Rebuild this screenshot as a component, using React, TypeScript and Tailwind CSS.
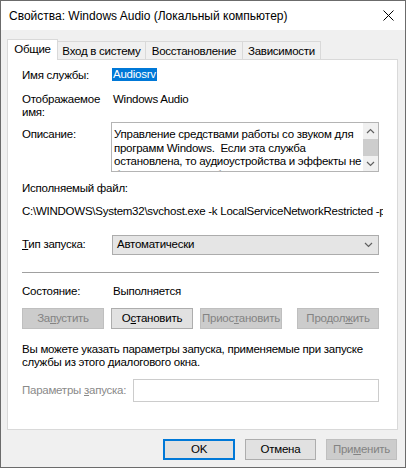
import React from "react";

const font = "font-['Segoe_UI','Liberation_Sans',sans-serif]";

const TabBtn: React.FC<{ label: string; w: string; active?: boolean }> = ({ label, w, active }) =>
  active ? (
    <div className={`${w} h-[21px] -mb-px relative z-10 bg-white border border-b-0 border-[#d9d9d9] flex items-center justify-center whitespace-nowrap`}>
      {label}
    </div>
  ) : (
    <div className={`${w} h-[18px] -ml-px bg-[#f0f0f0] border border-b-0 border-[#d9d9d9] flex items-center justify-center pt-[2px] whitespace-nowrap`}>
      {label}
    </div>
  );

const SvcButton: React.FC<{ children: React.ReactNode; disabled?: boolean }> = ({ children, disabled }) => (
  <div
    className={
      disabled
        ? "w-[82px] h-[21px] bg-[#cccccc] border border-[#bfbfbf] text-[#838383] flex items-center justify-center whitespace-nowrap"
        : "w-[82px] h-[21px] bg-[#e1e1e1] border border-[#adadad] text-black flex items-center justify-center whitespace-nowrap"
    }
  >
    {children}
  </div>
);

const Chevron: React.FC<{ up?: boolean }> = ({ up }) => (
  <svg width="9" height="6" viewBox="0 0 9 6">
    <path d={up ? "M1 5 L4.5 1.5 L8 5" : "M1 1 L4.5 4.5 L8 1"} fill="none" stroke="#606060" strokeWidth="1.2" />
  </svg>
);

const App: React.FC = () => {
  return (
    <div
      className={`w-[406px] h-[468px] bg-[#f0f0f0] border border-[#6b6b6b] flex flex-col text-[11.5px] tracking-[-0.25px] text-black ${font}`}
    >
      {/* title bar */}
      <div className="h-[29px] bg-white flex items-center justify-between pl-[8px] pr-[11px] shrink-0">
        <span className="text-[12px] tracking-normal whitespace-nowrap">Свойства: Windows Audio (Локальный компьютер)</span>
        <svg width="11" height="11" viewBox="0 0 11 11">
          <path d="M0.5 0.5 L10.5 10.5 M10.5 0.5 L0.5 10.5" stroke="#000" strokeWidth="1" />
        </svg>
      </div>

      <div className="pl-[6px] pr-[7px] pt-[8px]">
        {/* tabs */}
        <div className="flex items-end h-[21px]">
          <TabBtn label="Общие" w="w-[51px]" active />
          <TabBtn label="Вход в систему" w="w-[89px]" />
          <TabBtn label="Восстановление" w="w-[98px]" />
          <TabBtn label="Зависимости" w="w-[79px]" />
        </div>

        {/* panel */}
        <div className="h-[371px] bg-white border border-[#d9d9d9] pl-[14px] pr-[18px] pt-[8px] flex flex-col">
          <div className="flex h-[14px] leading-[14px]">
            <span className="w-[90px]">Имя службы:</span>
            <span className="bg-[#0078d7] text-white px-px leading-[13px] h-[13px]">Audiosrv</span>
          </div>

          <div className="flex mt-[11px] leading-[13px]">
            <span className="w-[91px]">
              Отображаемое
              <br />
              имя:
            </span>
            <span>Windows Audio</span>
          </div>

          <div className="flex mt-[3px]">
            <span className="w-[89px] pt-[5px] leading-[14px]">Описание:</span>
            <div className="flex-1 h-[50px] border border-[#b4b4b4] flex overflow-hidden">
              <div className="flex-1 pl-[2px] pt-[5px] leading-[13.7px] overflow-hidden">
                Управление средствами работы со звуком для программ Windows.&nbsp; Если эта служба остановлена, то
                аудиоустройства и эффекты не будут правильно работать.&nbsp; Если данная служба отключена, то
                все явно зависимые от нее службы не смогут запуститься.
              </div>
              <div className="w-[15px] bg-[#f0f0f0] flex flex-col items-center">
                <div className="h-[16px] flex items-center justify-center">
                  <Chevron up />
                </div>
                <div className="w-[15px] h-[17px] bg-[#cdcdcd]" />
                <div className="flex-1 flex items-center justify-center">
                  <Chevron />
                </div>
              </div>
            </div>
          </div>

          <div className="mt-[9px] leading-[14px]">Исполняемый файл:</div>
          <div className="mt-[9px] leading-[14px] whitespace-nowrap overflow-hidden w-[361px]">
            C:\WINDOWS\System32\svchost.exe -k LocalServiceNetworkRestricted -p
          </div>

          <div className="flex items-center mt-[17px] h-[20px]">
            <span className="w-[90px]">
              <u>Т</u>ип запуска:
            </span>
            <div className="flex-1 h-[20px] bg-[#e5e5e5] border border-[#acacac] flex items-center justify-between pl-[4px] pr-[5px]">
              <span>Автоматически</span>
              <Chevron />
            </div>
          </div>

          <div className="mt-[17px] h-px bg-[#a0a0a0]" />

          <div className="flex mt-[11px] leading-[14px]">
            <span className="w-[91px]">Состояние:</span>
            <span>Выполняется</span>
          </div>

          <div className="flex mt-[10px]">
            <SvcButton disabled>
              <span>
                За<u>п</u>устить
              </span>
            </SvcButton>
            <div className="ml-[7px]">
              <SvcButton>
                <span>
                  О<u>с</u>тановить
                </span>
              </SvcButton>
            </div>
            <div className="ml-[7px]">
              <SvcButton disabled>
                <span>
                  Приос<u>т</u>ановить
                </span>
              </SvcButton>
            </div>
            <div className="ml-auto">
              <SvcButton disabled>
                <span>
                  Продол<u>ж</u>ить
                </span>
              </SvcButton>
            </div>
          </div>

          <div className="mt-[14px] leading-[13px] whitespace-nowrap">
            Вы можете указать параметры запуска, применяемые при запуске
            <br />
            службы из этого диалогового окна.
          </div>

          <div className="flex items-center mt-[10px]">
            <span className="w-[111px] text-[#8a8a8a] whitespace-nowrap">
              Параметры <u>з</u>апуска:
            </span>
            <div className="flex-1 h-[23px] border border-[#cccccc] bg-white" />
          </div>
        </div>

        {/* dialog buttons */}
        <div className="flex justify-end gap-[10px] mt-[9px] pr-[1px]">
          <div className="w-[72px] h-[21px] bg-[#e1e1e1] border-2 border-[#0078d7] flex items-center justify-center">
            OK
          </div>
          <div className="w-[71px] h-[21px] bg-[#e1e1e1] border border-[#adadad] flex items-center justify-center">
            Отмена
          </div>
          <div className="w-[71px] h-[21px] bg-[#cccccc] border border-[#bfbfbf] text-[#838383] flex items-center justify-center">
            <span>
              При<u>м</u>енить
            </span>
          </div>
        </div>
      </div>
    </div>
  );
};

export default App;
